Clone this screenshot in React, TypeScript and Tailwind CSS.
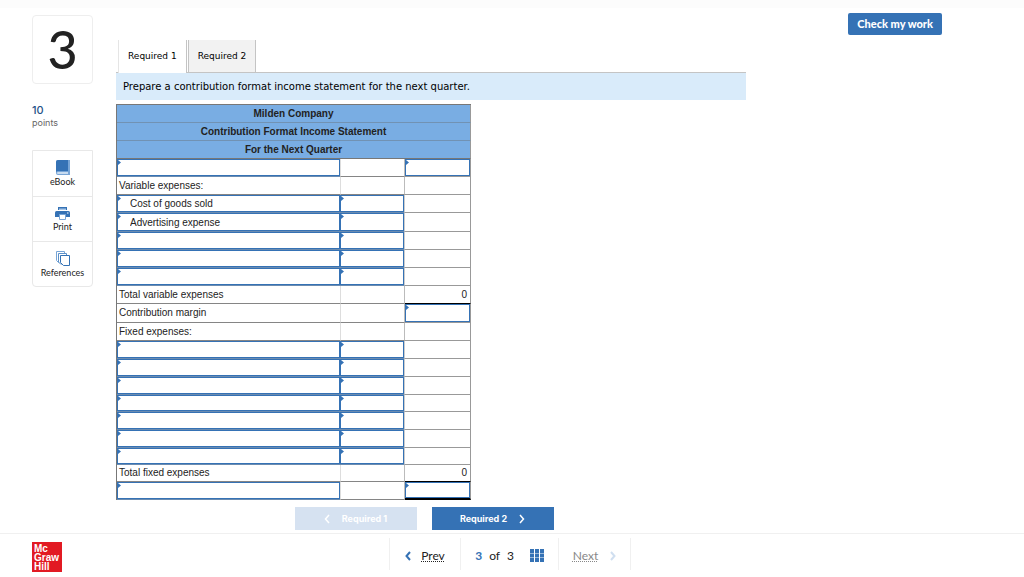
import React from "react";

type Row = {
  label?: string;
  indent?: boolean;
  // which of the three columns can be filled in
  inputs?: [boolean, boolean, boolean];
  total?: string;
  height: string;
  rule?: string;
};

const SHORT = "h-[17px]";
const NORMAL = "h-[18px]";
const TALL = "h-[19px]";

const rows: Row[] = [
  { inputs: [true, false, true], height: NORMAL },
  { label: "Variable expenses:", height: NORMAL },
  { label: "Cost of goods sold", indent: true, inputs: [true, true, false], height: NORMAL },
  { label: "Advertising expense", indent: true, inputs: [true, true, false], height: TALL },
  { inputs: [true, true, false], height: NORMAL },
  { inputs: [true, true, false], height: NORMAL },
  { inputs: [true, true, false], height: NORMAL },
  { label: "Total variable expenses", total: "0", height: NORMAL, rule: "border-b-black" },
  { label: "Contribution margin", inputs: [false, false, true], height: TALL },
  { label: "Fixed expenses:", height: NORMAL },
  { inputs: [true, true, false], height: NORMAL },
  { inputs: [true, true, false], height: NORMAL },
  { inputs: [true, true, false], height: NORMAL },
  { inputs: [true, true, false], height: SHORT },
  { inputs: [true, true, false], height: NORMAL },
  { inputs: [true, true, false], height: NORMAL },
  { inputs: [true, true, false], height: SHORT },
  { label: "Total fixed expenses", total: "0", height: SHORT, rule: "border-b-black" },
  { inputs: [true, false, true], height: NORMAL, rule: "border-b-2 border-b-black" },
];

const headings = [
  { text: "Milden Company", height: NORMAL },
  { text: "Contribution Format Income Statement", height: NORMAL },
  { text: "For the Next Quarter", height: NORMAL },
];

function EntryCell({ value, indent, name }: { value?: string; indent?: boolean; name: string }) {
  return (
    <div className="relative h-full">
      <input
        aria-label={name}
        defaultValue={value}
        className={`block h-full w-full border border-[#3572b5] bg-white outline-none ${
          indent ? "pl-3" : "pl-1"
        }`}
      />
      <svg className="absolute top-px left-0 h-[5px] w-1" viewBox="0 0 4 5" fill="#3572b5">
        <path d="M0 0H1L4 2.5L1 5H0Z" />
      </svg>
    </div>
  );
}

function StatementTable() {
  return (
    <table className="w-[355px] table-fixed border-separate border-spacing-0 border-t border-l border-[#777] font-['Liberation_Sans',Arial,sans-serif] text-[10px] leading-3 text-[#222]">
      <colgroup>
        <col className="w-[223px]" />
        <col className="w-[65px]" />
        <col className="w-[66px]" />
      </colgroup>
      <thead>
        {headings.map((h, i) => (
          <tr key={h.text}>
            <th
              colSpan={3}
              className={`border-r border-b border-r-[#999] bg-[#79ade3] p-0 font-bold ${h.height} ${
                i === 2 ? "border-b-[#777]" : "border-b-[#7192b3]"
              }`}
            >
              {h.text}
            </th>
          </tr>
        ))}
      </thead>
      <tbody>
        {rows.map((row, i) => {
          const [first, second, third] = row.inputs ?? [false, false, false];
          return (
            <tr key={i}>
              <td
                className={`border-b p-0 ${row.height} ${
                  first ? "border-b-[#6c8cb0]" : "border-b-[#858585]"
                }`}
              >
                {first ? (
                  <EntryCell value={row.label} indent={row.indent} name={`Row ${i + 1} description`} />
                ) : (
                  <span className="pl-[2px]">{row.label}</span>
                )}
              </td>
              <td
                className={`border-r border-b p-0 ${row.height} ${
                  second
                    ? "border-r-[#ccc] border-b-[#6c8cb0]"
                    : "border-l border-r-[#bbb] border-b-[#858585] border-l-[#ddd]"
                }`}
              >
                {second && <EntryCell name={`Row ${i + 1} amount`} />}
              </td>
              <td
                className={`border-r border-b border-r-[#999] p-0 text-right ${row.height} ${
                  row.rule ?? "border-b-[#999]"
                }`}
              >
                {third ? (
                  <EntryCell name={`Row ${i + 1} total`} />
                ) : (
                  <span className="pr-[3px]">{row.total}</span>
                )}
              </td>
            </tr>
          );
        })}
      </tbody>
    </table>
  );
}

function BookIcon() {
  return (
    <svg width="14" height="15" viewBox="0 0 14 15">
      <path d="M2 0H14V15H2Q0 15 0 13V2Q0 0 2 0Z" fill="#78a5d6" />
      <path d="M2 0H12V11H2Q1 11 0 12V2Q0 0 2 0Z" fill="#3572b5" />
      <path d="M2 12H12V14H2Q1 14 1 13T2 12Z" fill="#c9dcf0" />
    </svg>
  );
}

function PrintIcon() {
  return (
    <svg width="15" height="13" viewBox="0 0 15 13">
      <path d="M3 0H12V3H3Z" fill="#3572b5" />
      <path d="M4 1.5H11V3H4Z" fill="#a9c6e6" />
      <path d="M1.5 4H13.5Q15 4 15 5.500V10H0V5.500Q0 4 1.500 4Z" fill="#3572b5" />
      <path d="M4.500 7.500H10.500V12.500H4.500Z" fill="#fff" stroke="#78a5d6" />
      <path d="M12 6H13.500" stroke="#fff" />
    </svg>
  );
}

function ReferencesIcon() {
  return (
    <svg width="14" height="15" viewBox="0 0 14 15" fill="#fff">
      <path d="M.5 .5H8.500V11.500H2.500L.5 9.500Z" stroke="#78a5d6" />
      <path d="M2.500 2.500H10.500V13H4.500L2.500 11Z" stroke="#5b90c9" />
      <path d="M4.500 4.500H13.500V14.500H7.500L4.500 11.500Z" stroke="#3572b5" />
    </svg>
  );
}

function Chevron({ left, color, width = 2 }: { left?: boolean; color: string; width?: number }) {
  return (
    <svg width="6" height="10" viewBox="0 0 6 10" fill="none" stroke={color} strokeWidth={width}>
      <path d={left ? "M5 1L1.500 5L5 9" : "M1 1L4.500 5L1 9"} />
    </svg>
  );
}

function GridIcon() {
  return (
    <svg width="14" height="13" viewBox="0 0 14 13" fill="#3572b5">
      {[0, 5, 10].map((x) =>
        [0, 4.5, 9].map((y) => <rect key={`${x}-${y}`} x={x} y={y} width="4" height="4" />)
      )}
    </svg>
  );
}

const tools = [
  { label: "eBook", icon: <BookIcon /> },
  { label: "Print", icon: <PrintIcon /> },
  { label: "References", icon: <ReferencesIcon /> },
];

export default function App() {
  return (
    <div className="min-h-screen bg-white font-['Inter',sans-serif] text-[#222]">
      <div className="h-2 bg-[#fcfcfc]" />
      <div className="flex items-start pr-[82px] pl-8">
        <aside className="w-[61px] shrink-0 pt-[7px]">
          <div className="flex h-[69px] items-center justify-center rounded-sm border border-[#eee] pb-[2px] font-['Lato',sans-serif] text-[52px] leading-none font-medium">
            3
          </div>
          <div className="mt-[19px] text-[11px] leading-[14px] font-medium text-[#1f5288]">10</div>
          <div className="text-[9px] leading-3 text-[#666]">points</div>
          <div className="mt-[21px] rounded-b-sm border border-[#e8e8e8] font-['Lato',sans-serif]">
            {tools.map((tool, i) => (
              <button
                key={tool.label}
                className={`flex h-[45px] w-full flex-col items-center justify-center gap-[2px] text-[9px] leading-[10px] ${
                  i > 0 ? "border-t border-[#e8e8e8]" : ""
                }`}
              >
                {tool.icon}
                {tool.label}
              </button>
            ))}
          </div>
        </aside>

        <main className="ml-[23px] max-w-[630px] flex-1 pt-8">
          <div className="font-['DejaVu_Sans',Verdana,sans-serif] text-[9px] text-black">
            <div className="flex gap-px border-b border-[#c4c4c4] pl-[2px]">
              <button className="-mb-px h-[33px] border-x border-[#c4c4c4] border-l-[#e5e5e5] bg-white px-[9px]">
                Required 1
              </button>
              <button className="-mb-px h-[33px] border-x border-b border-[#c4c4c4] bg-[#f2f2f2] px-[9px] pt-px">
                Required 2
              </button>
            </div>
            <p className="bg-[#d9ebfa] px-[7px] py-[6px] text-[10px] leading-[15px]">
              Prepare a contribution format income statement for the next quarter.
            </p>
          </div>
          <div className="mt-1">
            <StatementTable />
          </div>
          <div className="mt-[7px] flex justify-center gap-[15px] pr-[14px] text-[9px] font-bold text-white">
            <button
              disabled
              className="flex h-[23px] w-[122px] items-center justify-center gap-3 bg-[#d6e2f1] pt-px"
            >
              <Chevron left color="#fff" width={1.5} />
              Required 1
            </button>
            <button className="flex h-[23px] w-[122px] items-center justify-center gap-3 bg-[#3572b5] pt-px">
              Required 2
              <Chevron color="#fff" width={1.5} />
            </button>
          </div>
        </main>

        <button className="mt-[5px] ml-auto h-[22px] rounded-xs bg-[#3572b5] px-[9px] font-['Lato',sans-serif] text-[11px] font-black text-white">
          Check my work
        </button>
      </div>

      <footer className="mt-[3px] grid grid-cols-[1fr_auto_1fr] items-start border-t border-[#f0f0f0] pt-1 pr-9 pl-8">
        <a
          href="#"
          className="mt-1 flex h-[30px] w-[30px] flex-col justify-center bg-[#e21a23] pl-[2px] font-['Liberation_Sans',sans-serif] text-[10px] leading-[9px] font-bold text-white"
        >
          <span>Mc</span>
          <span>Graw</span>
          <span>Hill</span>
        </a>
        <nav className="flex h-8 items-center border-x border-[#f0f0f0] font-['Lato',sans-serif] text-[12px]">
          <a href="#" className="flex h-full w-[70px] items-center justify-center gap-[10px] pt-[3px]">
            <Chevron left color="#3572b5" />
            <span className="underline decoration-dotted underline-offset-1">Prev</span>
          </a>
          <div className="flex h-full w-[99px] items-center justify-center gap-4 border-x border-[#f0f0f0] pt-[3px]">
            <span>
              <b className="mr-1 text-[#3572b5]">3</b> of <span className="ml-1">3</span>
            </span>
            <GridIcon />
          </div>
          <a
            href="#"
            className="flex h-full w-[71px] items-center justify-center gap-3 pt-[3px] text-[#888]"
          >
            <span className="underline decoration-dotted underline-offset-1">Next</span>
            <Chevron color="#d0dff0" />
          </a>
        </nav>
      </footer>
    </div>
  );
}
